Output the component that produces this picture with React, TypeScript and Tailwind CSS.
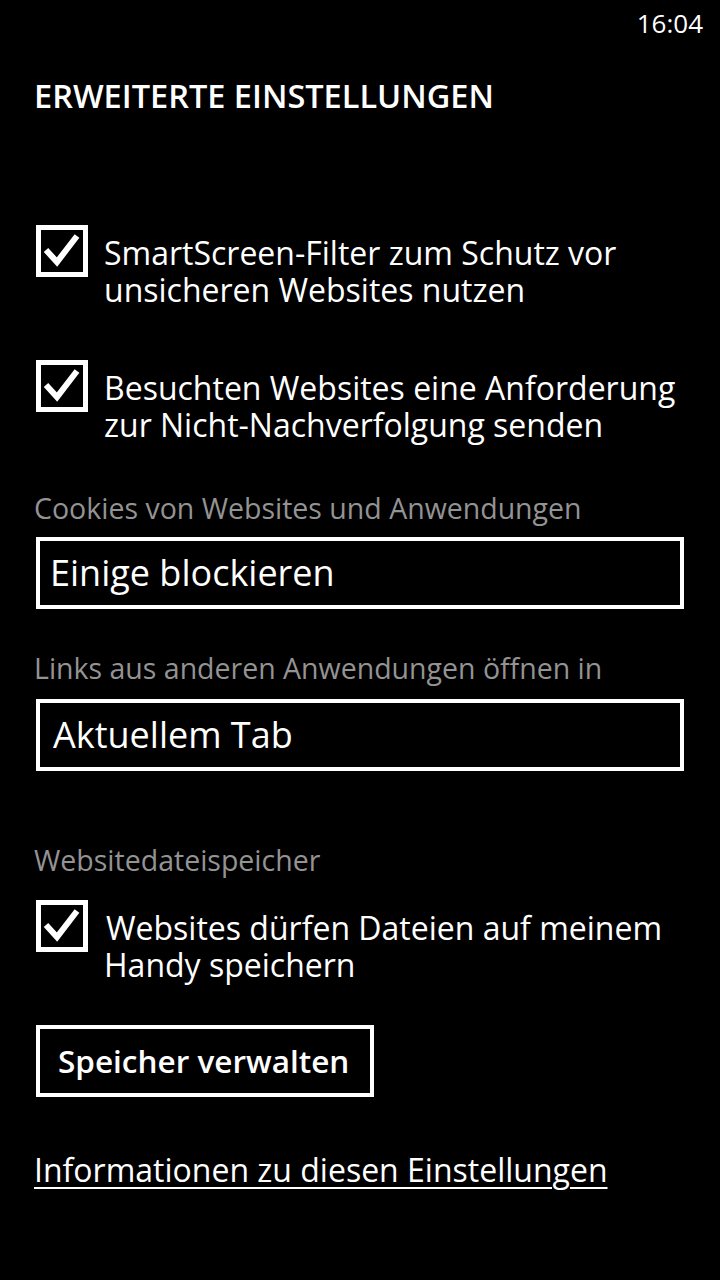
import React from "react"

function CheckBox() {
	return (
		<div className="w-[52px] h-[52px] shrink-0 border-[5px] border-white flex items-center justify-center">
			<svg width="42" height="42" viewBox="0 0 42 42" className="block">
				<path
					d="M5 20 L16 32 L36 6"
					fill="none"
					stroke="white"
					strokeWidth="6"
					strokeLinejoin="miter"
				/>
			</svg>
		</div>
	)
}

function CheckRow({ first, second, shift = false }: { first: string; second: string; shift?: boolean }) {
	return (
		<div className="flex items-start pl-[36px] h-[83px]">
			<CheckBox />
			<p className="pl-[16px] text-[32px] leading-[37px] pt-[9px] whitespace-nowrap">
				<span className={shift ? "pl-[2px]" : ""}>{first}</span>
				<br />
				{second}
			</p>
		</div>
	)
}

function Label({ children }: { children: React.ReactNode }) {
	return <div className="pl-[34px] text-[28.5px] leading-[34px] text-[#939393]">{children}</div>
}

function Picker({ value, pad }: { value: string; pad: string }) {
	return (
		<div className={`mx-[36px] h-[72px] border-[4px] border-white flex items-center text-[36px] ${pad}`}>
			{value}
		</div>
	)
}

export default function App() {
	return (
		<div
			className="w-[720px] h-[1280px] bg-black text-white overflow-hidden"
			style={{ fontFamily: '"Open Sans", "Noto Sans", sans-serif' }}
		>
			<div className="flex justify-end pr-[17px] pt-[5px] h-[46px] text-[26px] leading-[36px]">16:04</div>

			<h1 className="pl-[34px] mt-[30px] text-[32.5px] leading-[40px] font-semibold whitespace-nowrap">
				ERWEITERTE EINSTELLUNGEN
			</h1>

			<div className="mt-[109px]">
				<CheckRow first="SmartScreen-Filter zum Schutz vor" second="unsicheren Websites nutzen" />
			</div>

			<div className="mt-[52px]">
				<CheckRow first="Besuchten Websites eine Anforderung" second="zur Nicht-Nachverfolgung senden" />
			</div>

			<div className="mt-[48px]">
				<Label>Cookies von Websites und Anwendungen</Label>
			</div>
			<div className="mt-[12px]">
				<Picker value="Einige blockieren" pad="pl-[10px]" />
			</div>

			<div className="mt-[42px]">
				<Label>Links aus anderen Anwendungen öffnen in</Label>
			</div>
			<div className="mt-[14px]">
				<Picker value="Aktuellem Tab" pad="pl-[13px]" />
			</div>

			<div className="mt-[72px]">
				<Label>Websitedateispeicher</Label>
			</div>
			<div className="mt-[23px]">
				<CheckRow first="Websites dürfen Dateien auf meinem" second="Handy speichern" shift />
			</div>

			<div className="mt-[42px] pl-[36px]">
				<button className="h-[72px] border-[4px] border-white pl-[18px] pr-[21px] text-[31.5px] font-semibold whitespace-nowrap">
					Speicher verwalten
				</button>
			</div>

			<div className="mt-[53px] pl-[34px]">
				<a className="text-[32px] leading-[40px] underline underline-offset-[5px] decoration-[2px] whitespace-nowrap">
					Informationen zu diesen Einstellungen
				</a>
			</div>
		</div>
	)
}
